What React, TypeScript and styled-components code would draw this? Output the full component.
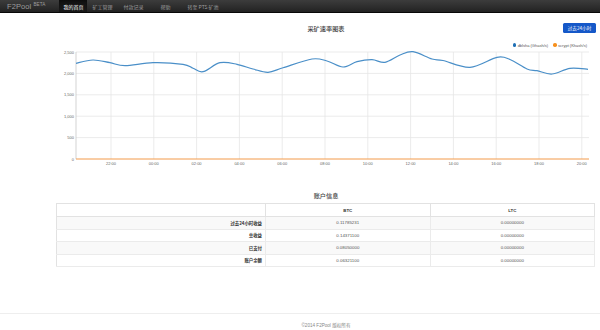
import React from "react";
import styled, { createGlobalStyle } from "styled-components";

const GlobalStyle = createGlobalStyle`
  body {
    margin: 0;
    background: #fff;
    font-family: "Liberation Sans", "Noto Sans CJK SC", sans-serif;
    color: #333;
  }
`;

// plot area in page pixels
const PLOT = { left: 76, right: 589, top: 52, bottom: 159 };
const SVG_X = 56;
const SVG_Y = 48;

const navItems = [
  { label: "我的首页", active: true, offset: 14 },
  { label: "矿工管理", active: false, offset: 1 },
  { label: "付款记录", active: false, offset: 3 },
  { label: "帮助", active: false, offset: 9 },
  { label: "转至 PTS 矿池", active: false, offset: 9 },
];

// hashrate curve sampled from the screenshot (page x, page y)
const dblsha: [number, number][] = [
  [76, 63.3], [93, 60], [110, 62.7], [125, 65.7], [153, 62.7], [183, 64.3],
  [193, 68.3], [203, 71.7], [220, 62.7], [237, 64.3], [253, 69], [268, 72.3],
  [283, 67.7], [312, 59], [327, 61], [343, 67], [357, 61.7], [372, 59.7],
  [385, 62.3], [400, 55], [413, 51.7], [432, 59], [443, 60.5], [470, 67.3],
  [497, 57.3], [510, 59.5], [527, 69], [537, 70.7], [552, 74], [570, 68.3],
  [588, 69.3],
];

const yTicks = ["2,500", "2,000", "1,500", "1,000", "500", "0"];
const xTicks = ["22:00", "00:00", "02:00", "04:00", "06:00", "08:00", "10:00", "12:00", "14:00", "16:00", "18:00", "20:00"];

const rows = [
  { label: "过去24小时收益", btc: "0.11785231", ltc: "0.00000000" },
  { label: "总收益", btc: "0.14371100", ltc: "0.00000000" },
  { label: "已支付", btc: "0.08050000", ltc: "0.00000000" },
  { label: "账户余额", btc: "0.06321100", ltc: "0.00000000" },
];

const smoothPath = (pts: [number, number][]) => {
  const p = pts.map(([x, y]) => [x - SVG_X, y - SVG_Y]);
  let d = `M${p[0][0]},${p[0][1]}`;
  for (let i = 0; i < p.length - 1; i++) {
    const p0 = p[i - 1] || p[i];
    const p1 = p[i];
    const p2 = p[i + 1];
    const p3 = p[i + 2] || p2;
    const c1x = p1[0] + (p2[0] - p0[0]) / 6;
    const c1y = p1[1] + (p2[1] - p0[1]) / 6;
    const c2x = p2[0] - (p3[0] - p1[0]) / 6;
    const c2y = p2[1] - (p3[1] - p1[1]) / 6;
    d += ` C${c1x.toFixed(1)},${c1y.toFixed(1)} ${c2x.toFixed(1)},${c2y.toFixed(1)} ${p2[0]},${p2[1]}`;
  }
  return d;
};

const HashrateChart: React.FC = () => {
  const l = PLOT.left - SVG_X;
  const r = PLOT.right - SVG_X;
  const t = PLOT.top - SVG_Y;
  const b = PLOT.bottom - SVG_Y;
  const yStep = (b - t) / 5;
  const xStep = 42.8;
  const x0 = 111 - SVG_X;

  return (
    <ChartSvg width={540} height={122} viewBox="0 0 540 122">
      {yTicks.map((label, i) => (
        <g key={label}>
          {i < 5 && <line x1={l} x2={r} y1={t + i * yStep} y2={t + i * yStep} stroke="#e6e6e6" strokeWidth={0.8} />}
          <text x={l - 2} y={t + i * yStep + 1.5} textAnchor="end" fontSize={4} fill="#666">
            {label}
          </text>
        </g>
      ))}
      {xTicks.map((label, i) => (
        <g key={label}>
          <line x1={x0 + i * xStep} x2={x0 + i * xStep} y1={t} y2={b} stroke="#e6e6e6" strokeWidth={0.8} />
          <text x={x0 + i * xStep} y={b + 6} textAnchor="middle" fontSize={4} fill="#666">
            {label}
          </text>
        </g>
      ))}
      <line x1={l} x2={l} y1={t} y2={b} stroke="#c8c8c8" strokeWidth={0.8} />
      <path d={smoothPath(dblsha)} fill="none" stroke="#4a8fc8" strokeWidth={1.2} />
      <line x1={l} x2={r} y1={b} y2={b} stroke="#f39a4a" strokeWidth={1} />
    </ChartSvg>
  );
};

const App: React.FC = () => {
  return (
    <>
      <GlobalStyle />
      <Navbar>
        <Brand>
          F2Pool<sup>BETA</sup>
        </Brand>
        {navItems.map((item) => (
          <NavItem key={item.label} $active={item.active} $offset={item.offset}>
            {item.label}
          </NavItem>
        ))}
      </Navbar>
      <Container>
        <ChartHeader>
          <SectionTitle>采矿速率图表</SectionTitle>
          <RangeButton>过去24小时</RangeButton>
        </ChartHeader>
        <Legend>
          <LegendItem $color="#1f6fb4">dblsha (Ghash/s)</LegendItem>
          <LegendItem $color="#f7901e">scrypt (Khash/s)</LegendItem>
        </Legend>
        <HashrateChart />
        <AccountTitle>账户信息</AccountTitle>
        <Table>
          <thead>
            <tr>
              <HeadCell />
              <HeadCell>BTC</HeadCell>
              <HeadCell>LTC</HeadCell>
            </tr>
          </thead>
          <tbody>
            {rows.map((row, i) => (
              <Row key={row.label} $striped={i % 2 === 0}>
                <LabelCell>{row.label}</LabelCell>
                <Cell>{row.btc}</Cell>
                <Cell>{row.ltc}</Cell>
              </Row>
            ))}
          </tbody>
        </Table>
      </Container>
      <Footer>©2014 F2Pool 版权所有</Footer>
    </>
  );
};

const Navbar = styled.nav`
  display: flex;
  align-items: stretch;
  height: 13px;
  padding-left: 7px;
  background: linear-gradient(to bottom, #3c3c3c, #222);
  border-bottom: 1px solid #080808;
  box-sizing: border-box;
`;

const Brand = styled.div`
  display: flex;
  align-items: center;
  font-size: 7.5px;
  color: #9d9d9d;
  letter-spacing: 0.1px;
  sup {
    font-size: 4.6px;
    margin-left: 2px;
    align-self: flex-start;
    margin-top: 2px;
  }
`;

const NavItem = styled.div<{ $active: boolean; $offset: number }>`
  display: flex;
  align-items: center;
  margin-left: ${(p) => p.$offset}px;
  padding: 0 4px;
  font-size: 5px;
  font-family: "Noto Sans CJK SC", sans-serif;
  color: ${(p) => (p.$active ? "#fff" : "#9d9d9d")};
  background: ${(p) => (p.$active ? "linear-gradient(to bottom, #111, #1b1b1b)" : "transparent")};
  box-shadow: ${(p) => (p.$active ? "inset 0 1px 3px rgba(0,0,0,0.3)" : "none")};
`;

const Container = styled.main`
  width: 540px;
  margin-left: 56px;
`;

const ChartHeader = styled.div`
  position: relative;
  display: flex;
  justify-content: center;
  align-items: center;
  height: 10px;
  margin-top: 10px;
`;

const SectionTitle = styled.h3`
  margin: 0;
  font-size: 6.2px;
  font-weight: 500;
  font-family: "Noto Sans CJK SC", sans-serif;
  color: #444;
`;

const RangeButton = styled.button`
  position: absolute;
  right: 0;
  top: 0;
  height: 10px;
  width: 33px;
  padding: 0;
  border: none;
  border-radius: 1.5px;
  background: #1558c8;
  color: #fff;
  font-size: 4.6px;
  font-family: "Noto Sans CJK SC", sans-serif;
`;

const Legend = styled.div`
  display: flex;
  justify-content: flex-end;
  gap: 5px;
  margin-top: 9px;
  padding-right: 9px;
  height: 6px;
  align-items: center;
`;

const LegendItem = styled.span<{ $color: string }>`
  display: flex;
  align-items: center;
  font-size: 4px;
  color: #555;
  &::before {
    content: "";
    width: 3.5px;
    height: 3.5px;
    border-radius: 50%;
    background: ${(p) => p.$color};
    margin-right: 1.5px;
  }
`;

const ChartSvg = styled.svg`
  display: block;
  font-family: "Liberation Sans", sans-serif;
`;

const AccountTitle = styled.h3`
  margin: 21px 0 3px;
  text-align: center;
  font-size: 6.2px;
  font-weight: 500;
  font-family: "Noto Sans CJK SC", sans-serif;
  color: #444;
`;

const Table = styled.table`
  width: 539px;
  border-collapse: collapse;
  border: 1px solid #e2e2e2;
  font-size: 4.4px;
  table-layout: fixed;
  font-family: "Liberation Sans", "Noto Sans CJK SC", sans-serif;
`;

const HeadCell = styled.th`
  height: 12px;
  padding: 0 3px;
  border: 1px solid #e2e2e2;
  font-weight: bold;
  text-align: center;
  color: #333;
  &:first-child {
    width: 202px;
  }
`;

const Row = styled.tr<{ $striped: boolean }>`
  height: 12.5px;
  background: ${(p) => (p.$striped ? "#f9f9f9" : "#fff")};
`;

const Cell = styled.td`
  padding: 0 3px;
  border: 1px solid #ebebeb;
  border-left-color: #e2e2e2;
  text-align: center;
  color: #555;
`;

const LabelCell = styled(Cell)`
  text-align: right;
  font-weight: bold;
  color: #333;
  font-family: "Noto Sans CJK SC", sans-serif;
`;

const Footer = styled.footer`
  margin-top: 46px;
  border-top: 1px solid #eee;
  padding: 8px 4px 0 56px;
  text-align: center;
  font-size: 4.6px;
  color: #888;
  font-family: "Liberation Sans", "Noto Sans CJK SC", sans-serif;
`;

export default App;
